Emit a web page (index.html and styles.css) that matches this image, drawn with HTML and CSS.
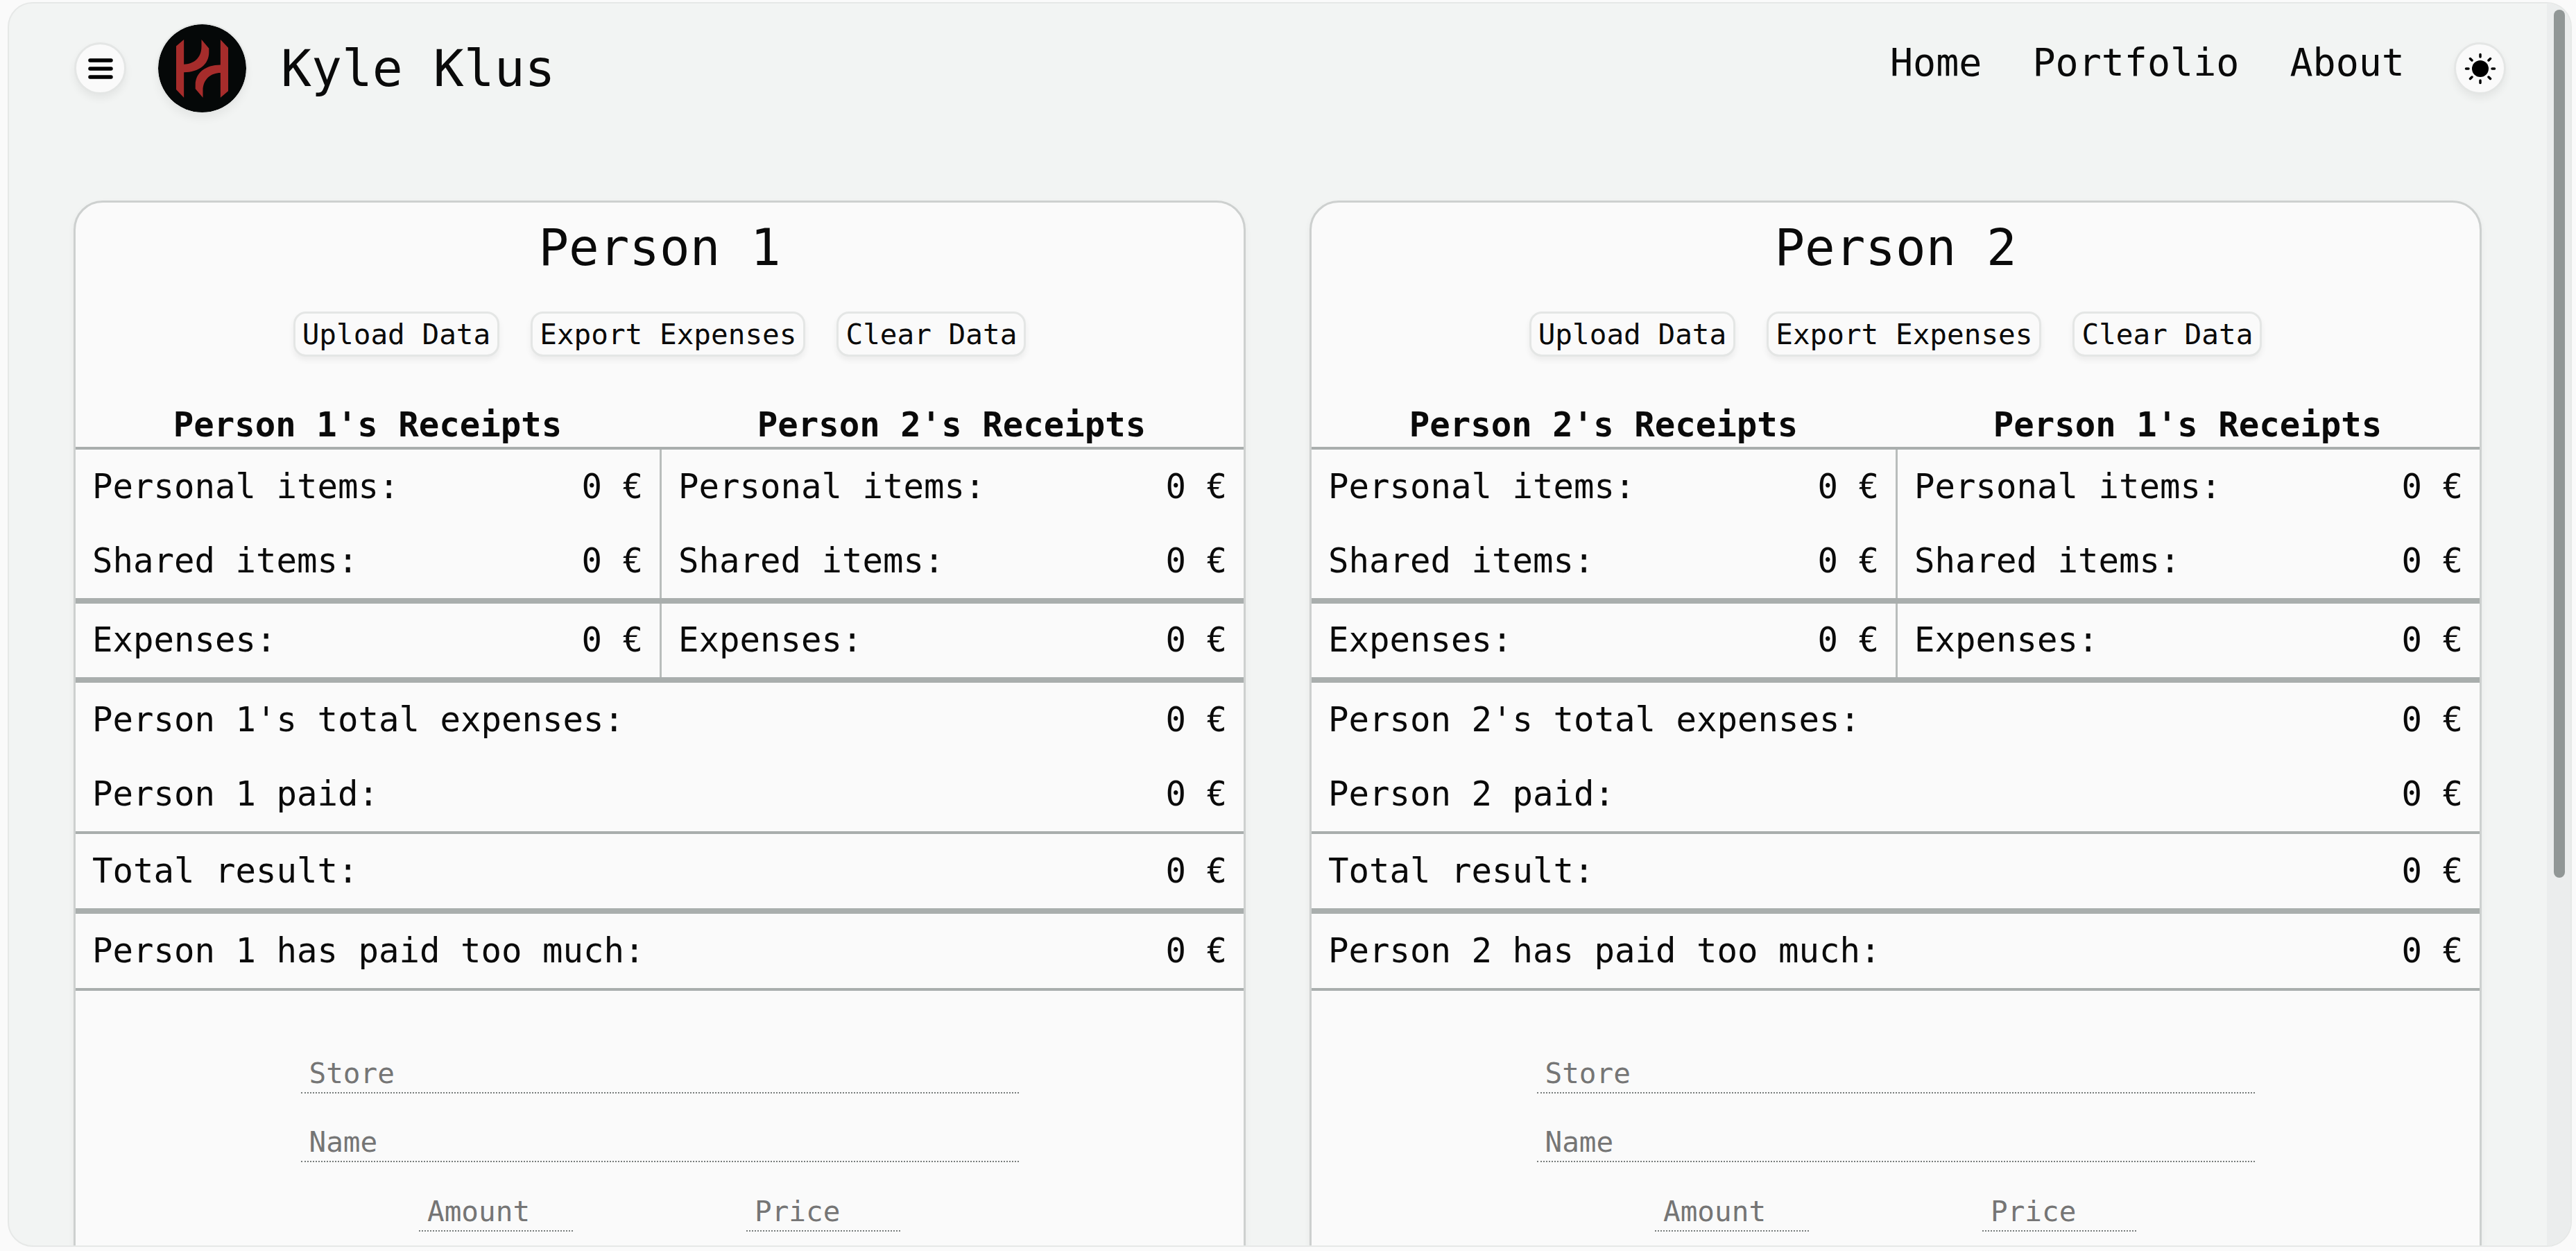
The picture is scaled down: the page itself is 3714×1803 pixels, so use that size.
FILE: index.html
```html
<!DOCTYPE html>
<html lang="en">
  <head>
    <meta charset="UTF-8" />
    <title>Kyle Klus</title>
    <link rel="stylesheet" href="styles.css">
  </head>
  <body>
    <div class="frame">
      <div class="content">
        <header class="topbar">
          <button type="button" class="round-btn" aria-label="Menu">
            <svg width="36" height="30" viewBox="0 0 36 30">
              <path d="M3 3H33M3 15H33M3 27H33" stroke="#000" stroke-width="5.5" stroke-linecap="round" />
            </svg>
          </button>
          <svg class="logo" width="127" height="127" viewBox="0 0 376 376">
            <circle cx="188" cy="188" r="188" fill="#050808" />
            <path fill="#a62c2b" d="M110 65V171C150 171 185 145 185 95V65L217 103V120C217 170 175 205 110 205V313L77 278V93Z" />
            <path fill="#a62c2b" d="M266 313V207C226 207 191 233 191 283V313L159 275V258C159 208 201 173 266 173V65L299 100V285Z" />
          </svg>
          <span class="brand">Kyle Klus</span>
          <nav class="nav">
            <a href="#">Home</a>
            <a href="#">Portfolio</a>
            <a href="#">About</a>
          </nav>
          <button type="button" class="round-btn round-btn-small" aria-label="Theme">
            <svg width="50" height="50" viewBox="0 0 50 50">
              <circle cx="25" cy="25" r="12" fill="#000" />
              <path d="M25 4.500V8M25 42V45.500M4.500 25H8M42 25H45.500M10.500 10.500L13 13M37 37L39.500 39.500M10.500 39.500L13 37M37 13L39.500 10.500" stroke="#000" stroke-width="3.500" stroke-linecap="round" />
            </svg>
          </button>
        </header>

        <main class="cards">
          <section class="card">
            <h2 class="card-title">Person 1</h2>
            <div class="actions">
              <button type="button" class="btn">Upload Data</button>
              <button type="button" class="btn">Export Expenses</button>
              <button type="button" class="btn">Clear Data</button>
            </div>
            <div class="split heads">
              <h3>Person 1's Receipts</h3>
              <h3>Person 2's Receipts</h3>
            </div>
            <div class="split line-thin">
              <div class="col">
                <div class="row"><span>Personal items:</span><span>0 €</span></div>
                <div class="row"><span>Shared items:</span><span>0 €</span></div>
              </div>
              <div class="col">
                <div class="row"><span>Personal items:</span><span>0 €</span></div>
                <div class="row"><span>Shared items:</span><span>0 €</span></div>
              </div>
            </div>
            <div class="split line-thick">
              <div class="col">
                <div class="row"><span>Expenses:</span><span>0 €</span></div>
              </div>
              <div class="col">
                <div class="row"><span>Expenses:</span><span>0 €</span></div>
              </div>
            </div>
            <div class="line-thick">
              <div class="row"><span>Person 1's total expenses:</span><span>0 €</span></div>
              <div class="row"><span>Person 1 paid:</span><span>0 €</span></div>
            </div>
            <div class="line-thin">
              <div class="row"><span>Total result:</span><span>0 €</span></div>
            </div>
            <div class="line-thick line-end">
              <div class="row"><span>Person 1 has paid too much:</span><span>0 €</span></div>
            </div>
            <form class="entry">
              <input type="text" placeholder="Store" />
              <input type="text" placeholder="Name" />
              <div class="entry-pair">
                <input type="text" placeholder="Amount" />
                <input type="text" placeholder="Price" />
              </div>
            </form>
          </section>

          <section class="card">
            <h2 class="card-title">Person 2</h2>
            <div class="actions">
              <button type="button" class="btn">Upload Data</button>
              <button type="button" class="btn">Export Expenses</button>
              <button type="button" class="btn">Clear Data</button>
            </div>
            <div class="split heads">
              <h3>Person 2's Receipts</h3>
              <h3>Person 1's Receipts</h3>
            </div>
            <div class="split line-thin">
              <div class="col">
                <div class="row"><span>Personal items:</span><span>0 €</span></div>
                <div class="row"><span>Shared items:</span><span>0 €</span></div>
              </div>
              <div class="col">
                <div class="row"><span>Personal items:</span><span>0 €</span></div>
                <div class="row"><span>Shared items:</span><span>0 €</span></div>
              </div>
            </div>
            <div class="split line-thick">
              <div class="col">
                <div class="row"><span>Expenses:</span><span>0 €</span></div>
              </div>
              <div class="col">
                <div class="row"><span>Expenses:</span><span>0 €</span></div>
              </div>
            </div>
            <div class="line-thick">
              <div class="row"><span>Person 2's total expenses:</span><span>0 €</span></div>
              <div class="row"><span>Person 2 paid:</span><span>0 €</span></div>
            </div>
            <div class="line-thin">
              <div class="row"><span>Total result:</span><span>0 €</span></div>
            </div>
            <div class="line-thick line-end">
              <div class="row"><span>Person 2 has paid too much:</span><span>0 €</span></div>
            </div>
            <form class="entry">
              <input type="text" placeholder="Store" />
              <input type="text" placeholder="Name" />
              <div class="entry-pair">
                <input type="text" placeholder="Amount" />
                <input type="text" placeholder="Price" />
              </div>
            </form>
          </section>
        </main>
      </div>
      <div class="scrollbar"><div class="thumb"></div></div>
    </div>
  </body>
</html>
```

FILE: styles.css
```css
* {
  box-sizing: border-box;
  padding: 0;
  margin: 0;
}

html,
body {
  height: 100%;
  overflow: hidden;
}

body {
  font-family: "DejaVu Sans Mono", "Liberation Mono", monospace;
  color: #0a0a0a;
  background-color: #fafafa;
  padding: 3px 6px 6px 11px;
}

.frame {
  display: flex;
  height: 100%;
  background-color: #f2f4f3;
  border: 2px solid #e6e8e7;
  border-radius: 36px;
  overflow: hidden;
}

.content {
  flex-grow: 1;
  min-width: 0;
  overflow: hidden;
}

.scrollbar {
  flex-shrink: 0;
  width: 34px;
  padding: 9px 8px 0 10px;
  background-color: #ebeded;
}

.thumb {
  width: 16px;
  height: 1251px;
  border-radius: 8px;
  background-color: #919796;
}

.topbar {
  display: flex;
  align-items: center;
  height: 127px;
  margin-top: 30px;
  padding: 0 59px 0 94px;
}

.round-btn {
  display: flex;
  align-items: center;
  justify-content: center;
  flex-shrink: 0;
  width: 75px;
  height: 75px;
  background-color: #fafafa;
  border: 3px solid #e4e6e5;
  border-radius: 50%;
  box-shadow: 0 6px 12px rgba(0, 0, 0, 0.06);
}

.logo {
  flex-shrink: 0;
  margin-left: 46px;
  border-radius: 50%;
  box-shadow: 0 0 0 2px #e4e6e5, 0 8px 14px rgba(0, 0, 0, 0.06);
}

.brand {
  margin-left: 50px;
  font-size: 73px;
}

.nav {
  display: flex;
  gap: 73px;
  margin-left: auto;
  margin-right: 71px;
  margin-bottom: 18px;
  font-size: 55px;
}

.nav a {
  color: inherit;
  text-decoration: none;
}

.cards {
  display: grid;
  grid-template-columns: 1fr 1fr;
  gap: 92px;
  margin-top: 127px;
  padding: 0 94px 0 93px;
}

.card {
  height: 1600px;
  background-color: #fafafa;
  border: 3px solid #cdd0cf;
  border-radius: 42px;
  box-shadow: 0 4px 10px rgba(0, 0, 0, 0.05);
}

.card-title {
  margin-top: 23px;
  font-size: 72.5px;
  font-weight: 400;
  text-align: center;
}

.actions {
  display: flex;
  justify-content: center;
  gap: 45px;
  margin-top: 50px;
}

.btn {
  height: 65px;
  padding: 0 10px;
  font-family: inherit;
  font-size: 41px;
  color: inherit;
  background-color: #fafafa;
  border: 3px solid #e4e6e5;
  border-radius: 18px;
  box-shadow: 0 5px 8px rgba(0, 0, 0, 0.06);
}

.split {
  display: grid;
  grid-template-columns: 1fr 1fr;
}

.heads {
  margin-top: 67px;
  text-align: center;
}

.heads h3 {
  font-size: 49px;
  line-height: 63px;
}

.line-thin {
  border-top: 4px solid #a9aead;
}

.line-thick {
  border-top: 8px solid #a9aead;
}

.line-end {
  border-bottom: 4px solid #a9aead;
}

.col:last-child {
  border-left: 3px solid #b9bdbc;
}

.row {
  display: flex;
  justify-content: space-between;
  align-items: center;
  height: 106.8px;
  padding: 0 24px;
  font-size: 49px;
}

.entry {
  display: flex;
  flex-direction: column;
  align-items: center;
  gap: 43.5px;
  margin-top: 92px;
}

.entry input {
  width: 1035px;
  height: 56px;
  padding: 0 12px;
  font-family: inherit;
  font-size: 41px;
  background: transparent;
  border: 0;
  border-bottom: 2px dotted #777c7b;
  outline: none;
}

.entry input::placeholder {
  color: #757575;
}

.entry-pair {
  display: flex;
  justify-content: center;
  gap: 250px;
}

.entry-pair input {
  width: 222px;
}
```
